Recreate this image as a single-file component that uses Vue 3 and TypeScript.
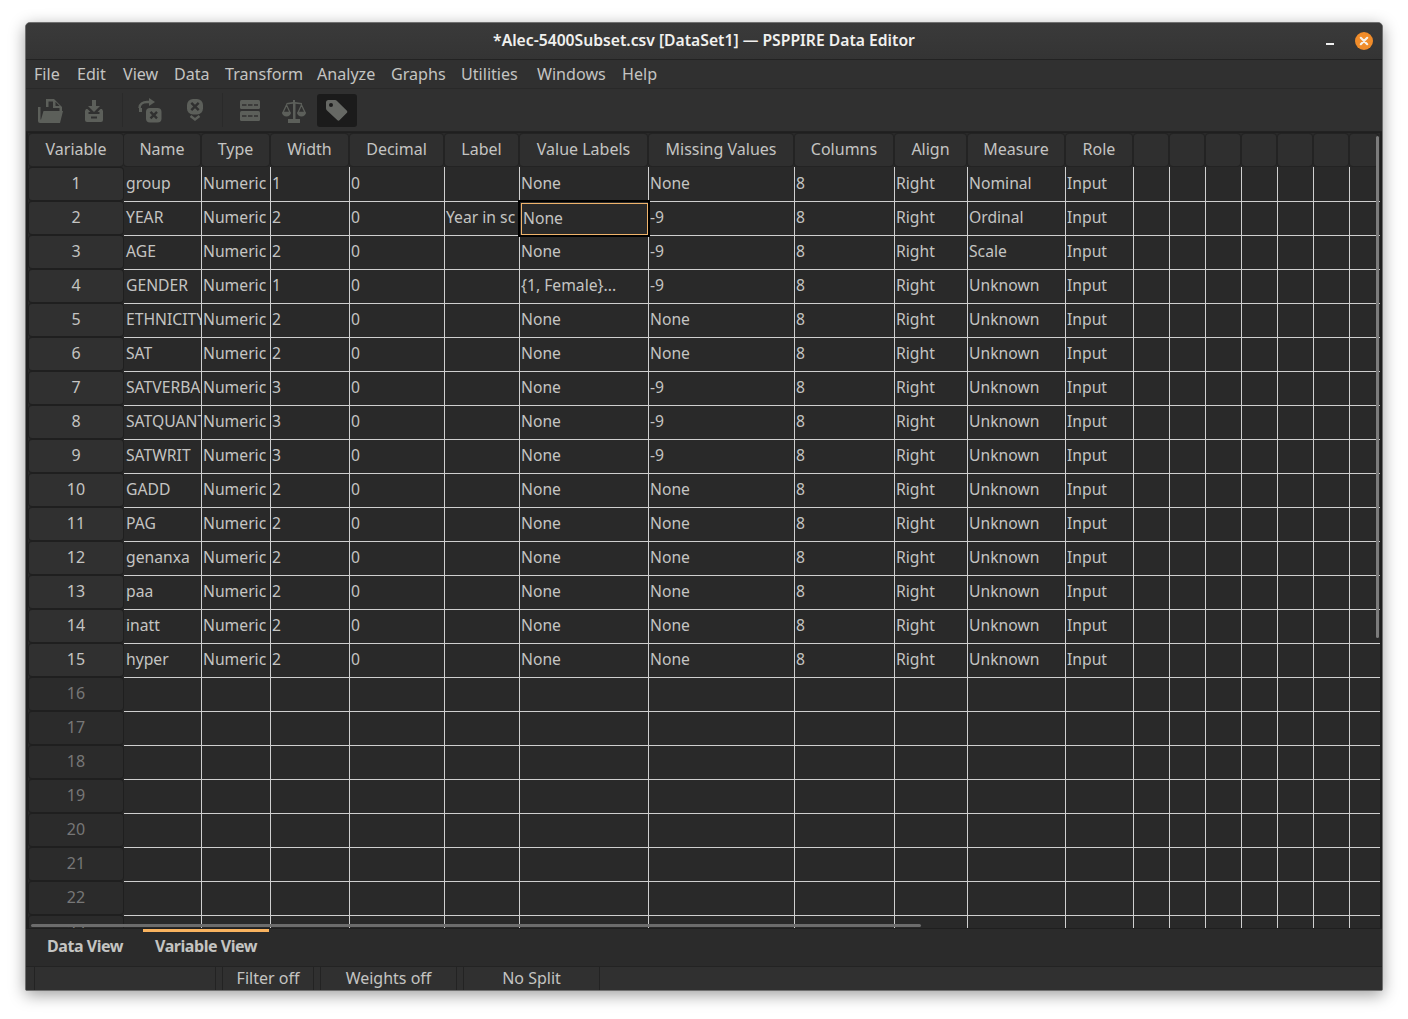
<script setup lang="ts">
const menus: string[] = ['File', 'Edit', 'View', 'Data', 'Transform', 'Analyze', 'Graphs', 'Utilities', 'Windows', 'Help']
const headers: string[] = ['Name', 'Type', 'Width', 'Decimal', 'Label', 'Value Labels', 'Missing Values', 'Columns', 'Align', 'Measure', 'Role', '', '', '', '', '', '', '']
type Row = [string, string, string, string, string, string]
const raw: Row[] = [
  ['group', '1', '', 'None', 'None', 'Nominal'],
  ['YEAR', '2', 'Year in sc', 'None', '-9', 'Ordinal'],
  ['AGE', '2', '', 'None', '-9', 'Scale'],
  ['GENDER', '1', '', '{1, Female}...', '-9', 'Unknown'],
  ['ETHNICITY', '2', '', 'None', 'None', 'Unknown'],
  ['SAT', '2', '', 'None', 'None', 'Unknown'],
  ['SATVERBAL', '3', '', 'None', '-9', 'Unknown'],
  ['SATQUANT', '3', '', 'None', '-9', 'Unknown'],
  ['SATWRIT', '3', '', 'None', '-9', 'Unknown'],
  ['GADD', '2', '', 'None', 'None', 'Unknown'],
  ['PAG', '2', '', 'None', 'None', 'Unknown'],
  ['genanxa', '2', '', 'None', 'None', 'Unknown'],
  ['paa', '2', '', 'None', 'None', 'Unknown'],
  ['inatt', '2', '', 'None', 'None', 'Unknown'],
  ['hyper', '2', '', 'None', 'None', 'Unknown'],
]
const filled: string[][] = raw.map((r) => [r[0], 'Numeric', r[1], '0', r[2], r[3], r[4], '8', 'Right', r[5], 'Input', '', '', '', '', '', '', ''])
const blank: string[] = headers.map(() => '')
const rows = [...filled, ...Array.from({ length: 8 }, () => blank)]
</script>

<template>
  <div class="window">
    <header class="titlebar">
      <span class="title">*Alec-5400Subset.csv [DataSet1] — PSPPIRE Data Editor</span>
      <span class="minimize"></span>
      <span class="close">
        <svg width="18" height="18" viewBox="0 0 18 18"><path d="M5.800 5.800l6.400 6.400M12.200 5.800l-6.400 6.400" stroke="#f6f1ea" stroke-width="2.200" stroke-linecap="round" /></svg>
      </span>
    </header>
    <nav class="menubar">
      <span v-for="m in menus" :key="m" class="menu">{{ m }}</span>
    </nav>
    <div class="toolbar">
      <span class="tool t-open">
        <svg width="26" height="25" viewBox="0 0 26 25"><path fill="#5c5f5a" d="M8 1h8l8 8v4h-2.500V10H15V3.500H10.500V9H8zM17.500 3.800V8h4.200zM0 9h2.500v12.500H3L5.500 13H25l-3 12H2a2 2 0 0 1-2-2z" /></svg>
      </span>
      <span class="tool t-save">
        <svg width="18" height="22" viewBox="0 0 18 22"><path fill="#5c5f5a" fill-rule="evenodd" d="M7 0h4v6h4l-6 6-6-6h4zM1 9h1.500l3 3H3.500v2h11v-2h-2l3-3H17l1 2v9a2 2 0 0 1-2 2H2a2 2 0 0 1-2-2v-9zM6 16.500v2h6v-2z" /></svg>
      </span>
      <span class="tsep"></span>
      <span class="tool t-undo">
        <svg width="24" height="25" viewBox="0 0 24 25"><path fill="none" stroke="#5c5f5a" stroke-width="2.500" d="M1.500 10C1.500 6 5 4 9 4h4" /><path fill="#5c5f5a" d="M11 0l6 4-6 4zM1 10h3v4H1z" /><rect x="8" y="10" width="15.500" height="14.500" rx="4" fill="#5c5f5a" /><path d="M12.500 13.800l6.500 6.500M19 13.800l-6.500 6.500" stroke="#303030" stroke-width="2.400" /></svg>
      </span>
      <span class="tool t-goto">
        <svg width="18" height="23" viewBox="0 0 18 23"><rect x="1" y="0" width="16" height="15.500" rx="6" fill="#5c5f5a" /><path d="M5.300 3.800l7.400 7.400M12.700 3.800l-7.400 7.400" stroke="#303030" stroke-width="2.400" /><path d="M4.500 17l4.500 3.500 4.500-3.500" fill="none" stroke="#5c5f5a" stroke-width="2.400" /></svg>
      </span>
      <span class="tsep tsep2"></span>
      <span class="tool t-table">
        <svg width="20" height="21" viewBox="0 0 20 21"><rect x="0" y="0" width="20" height="9" rx="1.500" fill="#5c5f5a" /><rect x="0" y="11" width="20" height="10" rx="1.500" fill="#5c5f5a" /><path d="M2 5h4.500M8 5h4.500M14 5h4M2 16h4.500M8 16h4.500M14 16h4" stroke="#303030" stroke-width="1.600" /></svg>
      </span>
      <span class="tool t-scale">
        <svg width="24" height="23" viewBox="0 0 24 23"><path fill="#5c5f5a" d="M11 0h2v2l7 1v1.500l-6.500-.8V19H18v4H6v-4h5V3.700L4.500 4.500V3L11 2z" /><path d="M4.500 5L1 12.500h7zM19.500 5L16 12.500h7z" fill="none" stroke="#5c5f5a" stroke-width="1.300" /><path fill="#5c5f5a" d="M0 12.500h9a4.500 4 0 0 1-9 0zM15 12.500h9a4.500 4 0 0 1-9 0z" /></svg>
      </span>
      <span class="tool t-tag">
        <svg width="22" height="21" viewBox="0 0 22 21"><path fill="#666864" fill-rule="evenodd" d="M2.500 0h6.500a3 3 0 0 1 2 .9l9.700 9.700a1.800 1.800 0 0 1 0 2.500l-7 7a1.800 1.800 0 0 1-2.500 0L1 10.400a3 3 0 0 1-1-2.200V2.500A2.500 2.500 0 0 1 2.500 0zM5 3a2 2 0 1 0 0 4 2 2 0 0 0 0-4z" /></svg>
      </span>
    </div>
    <section class="sheet">
      <div class="grid">
        <div class="corner hcell">Variable</div>
        <div v-for="(h, i) in headers" :key="'h' + i" class="hcell">{{ h }}</div>
        <template v-for="(row, r) in rows" :key="r">
          <div class="rowhead" :class="{ empty: r >= 15 }">{{ r + 1 }}</div>
          <div
            v-for="(cell, c) in row"
            :key="c"
            class="cell"
            :class="{ active: r === 1 && c === 5, namecol: c === 0, lastcol: c === 17 }"
          >{{ cell }}</div>
        </template>
      </div>
      <span class="vscroll"></span>
      <span class="hscroll"></span>
    </section>
    <div class="tabs">
      <span class="tab">Data View</span>
      <span class="tab current">Variable View</span>
    </div>
    <footer class="status">
      <span class="slot s1"></span>
      <span class="slot s2">Filter off</span>
      <span class="slot s3">Weights off</span>
      <span class="slot s4">No Split</span>
    </footer>
  </div>
</template>

<style>
html, body { background: #fff; margin: 0; height: 1019px; overflow: hidden; }
</style>

<style scoped>
.window {
  position: relative;
  box-sizing: border-box;
  margin: 22px 0 0 25px;
  width: 1358px;
  height: 969px;
  border: 1px solid #707070;
  border-radius: 5px 5px 2px 2px;
  background: #2e2e2e;
  box-shadow: 0 4px 16px rgba(0, 0, 0, 0.38);
  display: flex;
  flex-direction: column;
  overflow: hidden;
  font-family: "Noto Sans", "Open Sans", sans-serif;
  font-size: 16px;
  color: #c4c4c2;
}
.titlebar {
  flex: 0 0 36px;
  background: linear-gradient(#3a3a3a, #343434);
  border-bottom: 1px solid #222;
  display: flex;
  align-items: center;
  justify-content: center;
  position: relative;
}
.title { font-weight: 600; font-size: 15.700px; color: #f0f0ee; margin-top: -2px; }
.minimize {
  position: absolute;
  left: 1300px;
  top: 20px;
  width: 8px;
  height: 2px;
  background: #f0f0f0;
}
.close {
  position: absolute;
  left: 1329px;
  top: 9px;
  width: 18px;
  height: 18px;
  border-radius: 50%;
  background: #f08c2a;
  display: flex;
  align-items: center;
  justify-content: center;
}
.menubar {
  flex: 0 0 28px;
  background: #303030;
  border-bottom: 1px solid #292929;
  display: grid;
  grid-template-columns: 43px 46px 51px 51px 92px 74px 70px 76px 85px auto;
  align-items: center;
  padding-left: 8px;
}
.menu { line-height: 28px; font-size: 16.100px; }
.toolbar {
  flex: 0 0 42px;
  background: #303030;
  display: flex;
  align-items: flex-start;
  position: relative;
  padding-left: 12px;
}
.tool { display: flex; align-items: center; justify-content: center; }
.t-open { margin: 9px 0 0 0; }
.t-save { margin: 11px 0 0 21px; }
.tsep { width: 1px; height: 34px; margin: 4px 0 0 19px; background: #2a2a2a; }
.t-undo { margin: 9px 0 0 15px; }
.t-goto { margin: 10px 0 0 24px; }
.tsep2 { margin-left: 18px; }
.t-table { margin: 11px 0 0 17px; }
.t-scale { margin: 11px 0 0 22px; }
.t-tag {
  margin: 5px 0 0 11px;
  width: 40px;
  height: 33px;
  border-radius: 3px;
  background: #1b1b1b;
}
.sheet {
  flex: 0 0 798px;
  position: relative;
  overflow: hidden;
  background: #1f1f1f;
  border-top: 1px solid #222;
  box-sizing: border-box;
  padding: 1px 2px 0 2px;
}
.grid {
  display: grid;
  grid-template-columns: 96px 78px 69px 79px 95px 75px 129px 146px 100px 73px 98px 68px 36px 36px 36px 36px 36px 36px 30px;
  grid-auto-rows: 34px;
  height: 795px;
  overflow: hidden;
  background: #292929;
}
.hcell {
  background: #2f2f2f;
  border-radius: 3px;
  margin: 1px 2px 1px 0;
  line-height: 31px;
  text-align: center;
  box-shadow: 0 0 0 1px #232323;
  overflow: hidden;
  white-space: nowrap;
}
.corner { margin: 1px 1px 1px 1px; }
.rowhead {
  background: #303030;
  border-radius: 3px;
  margin: 1px 1px 1px 1px;
  line-height: 31px;
  text-align: center;
  box-shadow: 0 0 0 1px #1f1f1f;
}
.rowhead.empty { background: #2b2b2b; color: #777; }
.cell {
  box-sizing: border-box;
  border-right: 1px solid #cfcfcf;
  box-shadow: 0 1px 0 #cfcfcf;
  padding-left: 1px;
  font-size: 15.700px;
  line-height: 32px;
  overflow: hidden;
  white-space: nowrap;
  position: relative;
}
.namecol { padding-left: 2px; }
.lastcol { border-right: 0; }
.active { overflow: visible; z-index: 2; padding-left: 3px; line-height: 34px; }
.active::before {
  content: "";
  position: absolute;
  left: -2px;
  top: -1px;
  right: -2px;
  bottom: -2px;
  border: 2px solid #000;
  pointer-events: none;
}
.active::after {
  content: "";
  position: absolute;
  left: 1px;
  top: 2px;
  right: 0;
  bottom: 0;
  border: 1px solid #efb36b;
  pointer-events: none;
}
.vscroll {
  position: absolute;
  left: 1350px;
  top: 4px;
  width: 3px;
  height: 502px;
  border-radius: 2px;
  background: #7c7c7c;
}
.hscroll {
  position: absolute;
  left: 5px;
  top: 792px;
  width: 890px;
  height: 3px;
  border-radius: 2px;
  background: #6c6c6c;
}
.tabs {
  flex: 0 0 37px;
  background: #2b2b2b;
  border-bottom: 1px solid #232323;
  display: flex;
  padding-left: 9px;
  gap: 8px;
}
.tab {
  box-sizing: border-box;
  padding: 0 12px;
  font-weight: 700;
  font-size: 16px;
  letter-spacing: -0.45px;
  line-height: 29px;
  border-top: 3px solid transparent;
}
.current { border-top-color: #f9b35f; }
.status {
  flex: 1;
  background: #303030;
  display: flex;
  gap: 6px;
  padding-left: 8px;
}
.slot {
  box-sizing: border-box;
  border: 1px solid #232323;
  border-width: 0 1px;
  text-align: center;
  line-height: 22px;
  height: 23px;
}
.s1 { width: 182px; }
.s2 { width: 92px; }
.s3 { width: 137px; }
.s4 { width: 137px; }
</style>
